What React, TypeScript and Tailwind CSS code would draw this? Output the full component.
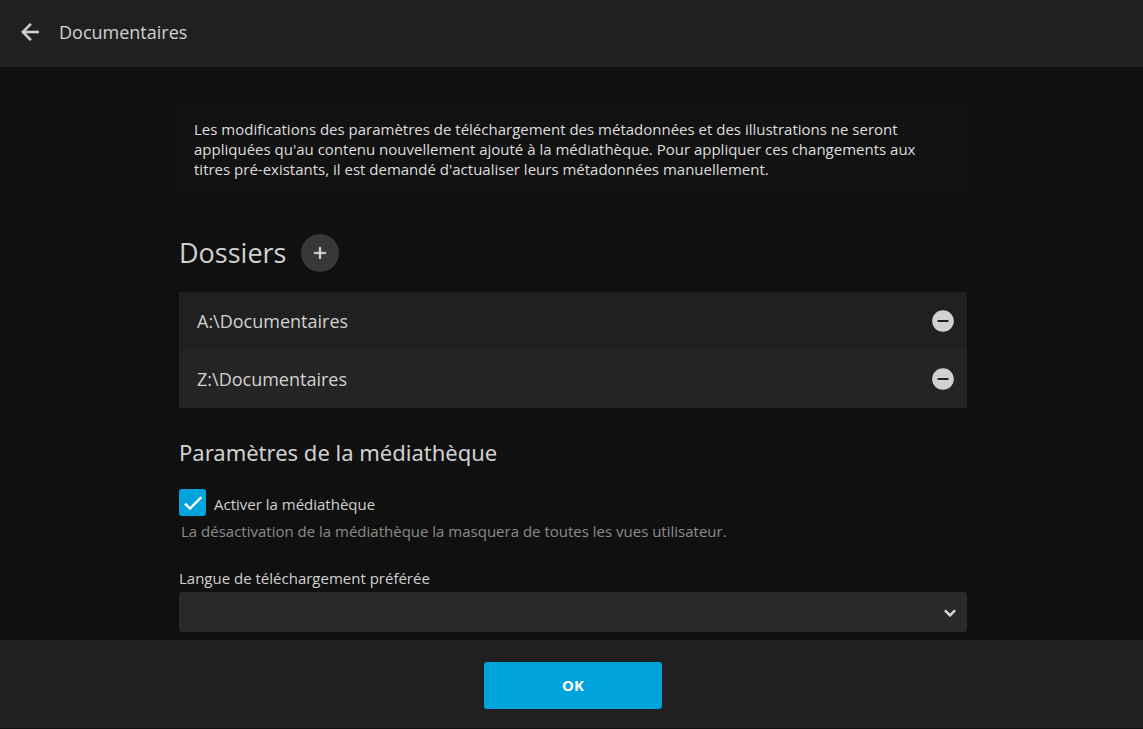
import { useState } from 'react';

const initialFolders = ['A:\\Documentaires', 'Z:\\Documentaires'];

function MaterialIcon({ path, className }: { path: string; className: string }) {
  return (
    <svg viewBox="0 0 24 24" fill="currentColor" aria-hidden="true" className={className}>
      <path d={path} />
    </svg>
  );
}

const icons = {
  back: 'M20 11H7.83l5.59-5.59L12 4l-8 8 8 8 1.41-1.41L7.83 13H20v-2z',
  add: 'M19 13h-6v6h-2v-6H5v-2h6V5h2v6h6v2z',
  remove: 'M12 2C6.48 2 2 6.48 2 12s4.48 10 10 10 10-4.48 10-10S17.52 2 12 2zm5 11H7v-2h10v2z',
  check: 'M9 16.17L4.83 12l-1.42 1.41L9 19 21 7l-1.41-1.41z',
  expand: 'M7.41 8.59L12 13.17l4.59-4.58L18 10l-6 6-6-6 1.41-1.41z',
};

export default function App() {
  const [folders, setFolders] = useState(initialFolders);
  const [enabled, setEnabled] = useState(true);

  return (
    <div className="flex h-screen flex-col bg-[#101010] font-['Open_Sans','Noto_Sans',sans-serif] text-[15px] leading-5 text-[#d1d1d1]">
      {/* Header */}
      <header className="flex h-[67px] shrink-0 items-center gap-[15px] bg-[#202020] px-4 pb-1">
        <button type="button" aria-label="Retour" className="flex size-7 items-center justify-center">
          <MaterialIcon path={icons.back} className="size-[26px] stroke-current stroke-[0.5]" />
        </button>
        <h1 className="text-lg">Documentaires</h1>
      </header>

      {/* Scrollable form */}
      <main className="min-h-0 flex-1 overflow-hidden px-4 pt-9">
        <div className="mx-auto max-w-[791px] pl-[3px]">
          <p className="mb-10 bg-[#121212] px-[15px] pt-4 pb-[15px] text-[#dedede]">
            Les modifications des paramètres de téléchargement des métadonnées et des illustrations ne seront
            appliquées qu'au contenu nouvellement ajouté à la médiathèque. Pour appliquer ces changements aux titres
            pré-existants, il est demandé d'actualiser leurs métadonnées manuellement.
          </p>

          <div className="mb-5 flex items-center gap-[15px]">
            <h2 className="text-[27px] leading-9">Dossiers</h2>
            <button
              type="button"
              aria-label="Ajouter un dossier"
              className="flex size-[38px] items-center justify-center rounded-full bg-[#383838] text-[#e4e4e4]"
            >
              <MaterialIcon path={icons.add} className="size-5 stroke-current stroke-[0.5]" />
            </button>
          </div>

          <ul className="mb-7">
            {folders.map((folder) => (
              <li
                key={folder}
                className="flex h-[58px] items-center justify-between bg-[#202020] pr-[11px] pb-px pl-[18px] even:bg-[#242424]"
              >
                <span className="text-lg">{folder}</span>
                <button
                  type="button"
                  aria-label={`Supprimer ${folder}`}
                  onClick={() => setFolders(folders.filter((f) => f !== folder))}
                >
                  <MaterialIcon path={icons.remove} className="size-[26px]" />
                </button>
              </li>
            ))}
          </ul>

          <h2 className="mb-[21px] font-['Noto_Sans',sans-serif] text-[22px] leading-8">
            Paramètres de la médiathèque
          </h2>

          <label className="mb-[5px] flex items-center gap-2">
            <span className="relative flex size-[27px] shrink-0">
              <input
                type="checkbox"
                checked={enabled}
                onChange={(e) => setEnabled(e.target.checked)}
                className="size-full appearance-none rounded-[3px] border-2 border-[#8c8c8c] checked:border-[#00a4dc] checked:bg-[#00a4dc]"
              />
              {enabled && (
                <MaterialIcon
                  path={icons.check}
                  className="pointer-events-none absolute inset-0 m-auto size-6 stroke-current stroke-[0.5] text-white"
                />
              )}
            </span>
            <span className="pt-0.5">Activer la médiathèque</span>
          </label>
          <p className="mb-[27px] pl-0.5 text-[#8b8b8b]">
            La désactivation de la médiathèque la masquera de toutes les vues utilisateur.
          </p>

          <label htmlFor="language" className="mb-1 block">
            Langue de téléchargement préférée
          </label>
          <div className="relative">
            <select id="language" className="block h-10 w-full appearance-none rounded-[3px] bg-[#292929] px-2">
              <option value=""></option>
              <option value="fr">Français</option>
            </select>
            <MaterialIcon
              path={icons.expand}
              className="pointer-events-none absolute top-2.5 right-1.5 size-[22px] stroke-current stroke-1"
            />
          </div>
        </div>
      </main>

      {/* Footer */}
      <footer className="flex h-[89px] shrink-0 items-start justify-center border-b border-[#101010] bg-[#202020] pt-[22px] pl-[3px]">
        <button
          type="submit"
          className="h-[47px] w-[178px] rounded-[3px] bg-[#00a4dc] pb-0.5 font-['Noto_Sans',sans-serif] font-bold text-white"
        >
          OK
        </button>
      </footer>
    </div>
  );
}
